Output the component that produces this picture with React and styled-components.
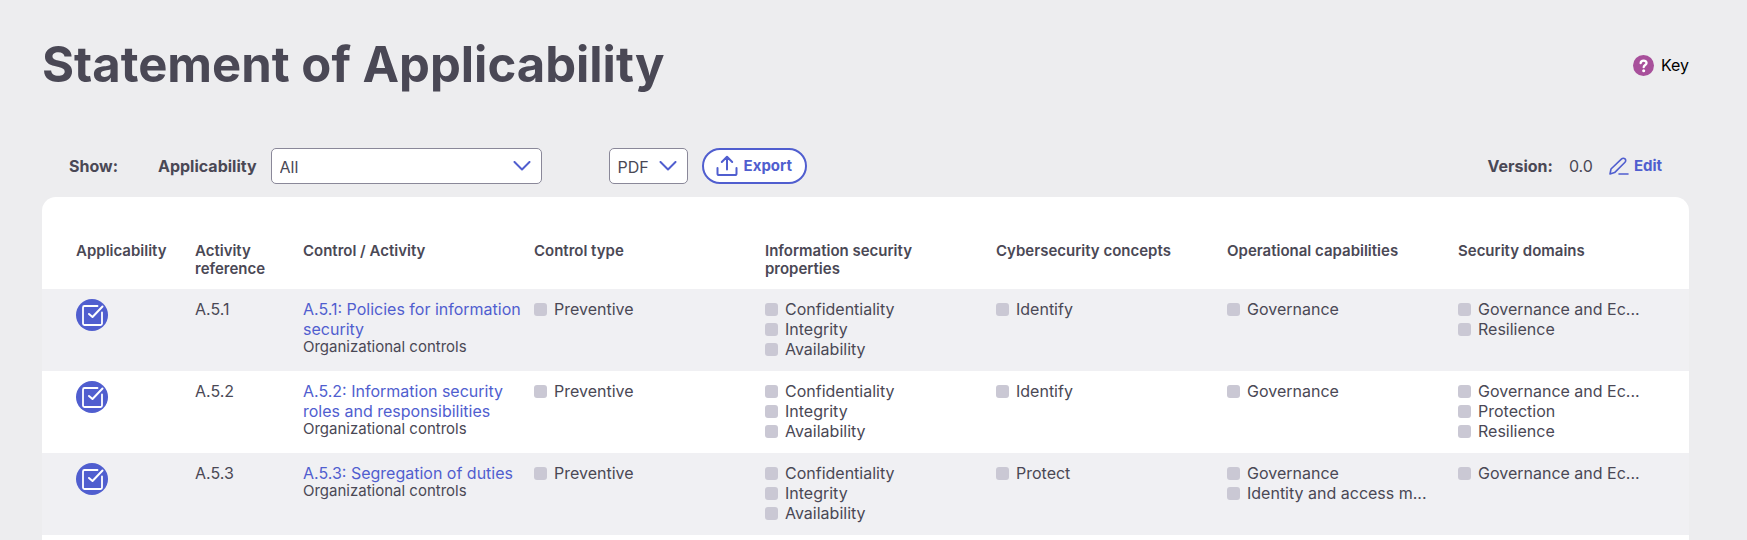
import React from "react";
import styled, { createGlobalStyle, css } from "styled-components";

const ink = "#4a4855";
const blue = "#505ecf";

const GlobalStyle = createGlobalStyle`
  * { box-sizing: border-box; }
  body {
    margin: 0;
    background: #ededef;
    color: ${ink};
    font-family: Inter, "Liberation Sans", sans-serif;
    font-size: 16px;
    line-height: 20px;
  }
`;

const Page = styled.main`
  padding: 36px 58px 0 42px;
`;

const Header = styled.header`
  display: flex;
  align-items: center;
  justify-content: space-between;
  margin-bottom: 54px;
`;

const Title = styled.h1`
  margin: 0;
  font-size: 49px;
  line-height: 58px;
  font-weight: 700;
`;

const KeyButton = styled.button`
  display: flex;
  align-items: center;
  gap: 7px;
  padding: 0;
  border: 0;
  background: none;
  color: #000;
  font: inherit;
`;

const Toolbar = styled.div`
  display: flex;
  align-items: center;
  justify-content: space-between;
  padding: 0 27px;
  margin-bottom: 13px;
`;

const Group = styled.div`
  display: flex;
  align-items: center;
  gap: ${(p) => p.$gap}px;
`;

const Strong = styled.span`
  font-weight: 700;
`;

const Field = styled.div`
  display: grid;
  align-items: center;
  width: ${(p) => p.$width}px;

  > * {
    grid-area: 1 / 1;
  }

  svg {
    justify-self: end;
    margin-right: 11px;
    pointer-events: none;
  }
`;

const Select = styled.select`
  appearance: none;
  width: 100%;
  height: 36px;
  padding: 2px 8px 0;
  border: 1px solid #8a8899;
  border-radius: 5px;
  background: #fff;
  color: ${ink};
  font: inherit;
`;

const action = css`
  display: flex;
  align-items: center;
  color: ${blue};
  font: inherit;
  font-size: 15px;
  font-weight: 700;
`;

const ExportButton = styled.button`
  ${action}
  gap: 6px;
  height: 36px;
  padding: 0 13px 0 12px;
  border: 2px solid ${blue};
  border-radius: 18px;
  background: #fff;
`;

const EditButton = styled.button`
  ${action}
  gap: 5px;
  padding: 0;
  border: 0;
  background: none;
`;

const Card = styled.section`
  min-height: calc(100vh - 197px);
  padding-top: 34px;
  border-radius: 14px 14px 0 0;
  background: #fff;
  overflow: hidden;
`;

const Table = styled.table`
  width: 100%;
  table-layout: fixed;
  border-collapse: collapse;
`;

const Col = styled.col`
  width: ${(p) => (p.$width ? `${p.$width}px` : "auto")};
`;

const HeadCell = styled.th`
  padding: 11px 40px 11px 0;
  font-size: 15px;
  line-height: 18px;
  font-weight: 600;
  text-align: left;
  vertical-align: top;

  &:first-child {
    padding-left: 34px;
    padding-right: 0;
  }
`;

const Row = styled.tr`
  &:nth-child(odd) {
    background: #f0f0f3;
  }
`;

const Cell = styled.td`
  height: 82px;
  padding: 10px 8px 10px 0;
  vertical-align: top;

  &:first-child {
    padding-left: 34px;
  }
`;

const ControlLink = styled.a`
  display: block;
  color: ${blue};
  text-decoration: none;
`;

const Category = styled.div`
  font-size: 15px;
  line-height: 16px;
`;

const TagList = styled.ul`
  margin: 0;
  padding: 0;
  list-style: none;
`;

const Tag = styled.li`
  display: flex;
  align-items: center;
  gap: 7px;
  white-space: nowrap;

  &::before {
    content: "";
    width: 13px;
    height: 13px;
    border-radius: 3px;
    background: #cac8d4;
  }
`;

const Icon = styled.svg`
  display: block;
  flex: none;
  fill: none;
  stroke: ${(p) => p.$color || blue};
  stroke-width: 2;
  stroke-linecap: round;
  stroke-linejoin: round;
`;

const Chevron = () => (
  <Icon width="18" height="10" viewBox="0 0 18 10" aria-hidden="true">
    <path d="M1.5 1 9 8.5 16.5 1" />
  </Icon>
);

const UploadIcon = () => (
  <Icon width="22" height="22" viewBox="0 0 22 22" aria-hidden="true">
    <path d="M1.5 13v5.5a1.6 1.6 0 0 0 1.6 1.6h15.8a1.6 1.6 0 0 0 1.6-1.6V13M11 14.5V2M5.8 7 11 1.8 16.2 7" />
  </Icon>
);

const PencilIcon = () => (
  <Icon width="20" height="18" viewBox="0 0 20 18" aria-hidden="true">
    <path
      strokeWidth="1.6"
      d="M1 17l1-5L12.6 1.9a2.4 2.4 0 0 1 3.4 0 2.4 2.4 0 0 1 0 3.4L5.6 15.6 1 17M10 17h9"
    />
  </Icon>
);

const HelpIcon = () => (
  <Icon width="21" height="21" viewBox="0 0 22 22" $color="#fff" aria-hidden="true">
    <circle cx="11" cy="11" r="11" fill="#a8509b" stroke="none" />
    <path strokeWidth="2.4" d="M8 8.6c.2-3.6 6.2-3.5 6.2-.2 0 2.2-3 2-3 4.4" />
    <circle cx="11.2" cy="16.4" r="1.6" fill="#fff" stroke="none" />
  </Icon>
);

const ApplicableIcon = () => (
  <Icon width="32" height="32" viewBox="0 0 32 32" $color="#fff" role="img" aria-label="Applicable">
    <circle cx="16" cy="16" r="16" fill={blue} stroke="none" />
    <path
      strokeWidth="1.8"
      d="M21.500 7H8.500A1.500 1.500 0 0 0 7 8.500v16A1.500 1.500 0 0 0 8.500 26h16a1.500 1.500 0 0 0 1.500-1.500V13.500"
    />
    <path d="M13 15l3.500 3L26.500 7.500" />
  </Icon>
);

const headings = [
  "Applicability",
  "Activity reference",
  "Control / Activity",
  "Control type",
  "Information security properties",
  "Cybersecurity concepts",
  "Operational capabilities",
  "Security domains",
];

const properties = ["Confidentiality", "Integrity", "Availability"];

const controls = [
  {
    ref: "A.5.1",
    name: "Policies for information security",
    tags: [["Preventive"], properties, ["Identify"], ["Governance"], ["Governance and Ec...", "Resilience"]],
  },
  {
    ref: "A.5.2",
    name: "Information security roles and responsibilities",
    tags: [
      ["Preventive"],
      properties,
      ["Identify"],
      ["Governance"],
      ["Governance and Ec...", "Protection", "Resilience"],
    ],
  },
  {
    ref: "A.5.3",
    name: "Segregation of duties",
    tags: [
      ["Preventive"],
      properties,
      ["Protect"],
      ["Governance", "Identity and access m..."],
      ["Governance and Ec..."],
    ],
  },
];

export default function App() {
  return (
    <>
      <GlobalStyle />
      <Page>
        <Header>
          <Title>Statement of Applicability</Title>
          <KeyButton type="button">
            <HelpIcon />
            Key
          </KeyButton>
        </Header>
        <Toolbar>
          <Group $gap={67}>
            <Group $gap={40}>
              <Strong>Show:</Strong>
              <Group $gap={14}>
                <Strong as="label" htmlFor="applicability">
                  Applicability
                </Strong>
                <Field $width={271}>
                  <Select id="applicability">
                    <option>All</option>
                  </Select>
                  <Chevron />
                </Field>
              </Group>
            </Group>
            <Group $gap={14}>
              <Field $width={79}>
                <Select aria-label="Export format">
                  <option>PDF</option>
                </Select>
                <Chevron />
              </Field>
              <ExportButton type="button">
                <UploadIcon />
                Export
              </ExportButton>
            </Group>
          </Group>
          <Group $gap={16}>
            <Strong>Version:</Strong>
            <span>0.0</span>
            <EditButton type="button">
              <PencilIcon />
              Edit
            </EditButton>
          </Group>
        </Toolbar>
        <Card>
          <Table>
            <colgroup>
              {headings.map((heading, i) => (
                <Col key={heading} $width={[153, 108][i]} />
              ))}
            </colgroup>
            <thead>
              <tr>
                {headings.map((heading) => (
                  <HeadCell key={heading} scope="col">
                    {heading}
                  </HeadCell>
                ))}
              </tr>
            </thead>
            <tbody>
              {controls.map((control) => (
                <Row key={control.ref}>
                  <Cell>
                    <ApplicableIcon />
                  </Cell>
                  <Cell>{control.ref}</Cell>
                  <Cell>
                    <ControlLink href="#">{`${control.ref}: ${control.name}`}</ControlLink>
                    <Category>Organizational controls</Category>
                  </Cell>
                  {control.tags.map((tags, i) => (
                    <Cell key={headings[i + 3]}>
                      <TagList>
                        {tags.map((tag) => (
                          <Tag key={tag}>{tag}</Tag>
                        ))}
                      </TagList>
                    </Cell>
                  ))}
                </Row>
              ))}
            </tbody>
          </Table>
        </Card>
      </Page>
    </>
  );
}
